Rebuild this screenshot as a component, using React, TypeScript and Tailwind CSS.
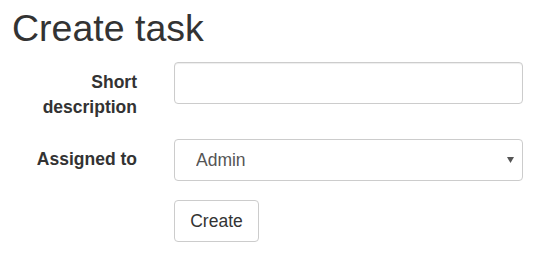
export default function App() {
  return (
    <div className="min-h-screen bg-white px-[12px] pt-[8px] font-['Liberation_Sans',Arial,sans-serif] text-[#333]">
      <h1 className="text-[37.5px] leading-[41px] font-normal">Create task</h1>
      <form className="mt-[13px] flex flex-col">
        <div className="flex items-start">
          <label className="w-[125px] pt-[8px] text-right text-[17.5px] leading-[25px] font-bold">
            Short
            <br />
            description
          </label>
          <input
            type="text"
            className="ml-[37px] h-[42px] w-[349px] rounded-[4px] border border-[#ccc] px-[15px] text-[17.5px] text-[#555] outline-none shadow-[inset_0_1px_1px_rgba(0,0,0,0.075)]"
          />
        </div>
        <div className="mt-[19px] flex items-start">
          <label className="w-[125px] pt-[8px] text-right text-[17.5px] leading-[25px] font-bold">
            Assigned to
          </label>
          <div className="relative ml-[37px] h-[42px] w-[349px]">
            <select className="h-full w-full appearance-none rounded-[4px] border border-[#ccc] bg-white pl-[21px] text-[17.5px] text-[#555] outline-none">
              <option>Admin</option>
            </select>
            <svg
              className="pointer-events-none absolute right-[9px] top-[17px]"
              width="7"
              height="7"
              viewBox="0 0 7 7"
            >
              <path d="M0 1 L7 1 L3.5 7 Z" fill="#555" />
            </svg>
          </div>
        </div>
        <div className="mt-[19px] flex">
          <div className="w-[125px]" />
          <button
            type="button"
            className="ml-[37px] h-[42px] w-[85px] rounded-[4px] border border-[#ccc] bg-white text-[17.5px] text-[#333]"
          >
            Create
          </button>
        </div>
      </form>
    </div>
  );
}
